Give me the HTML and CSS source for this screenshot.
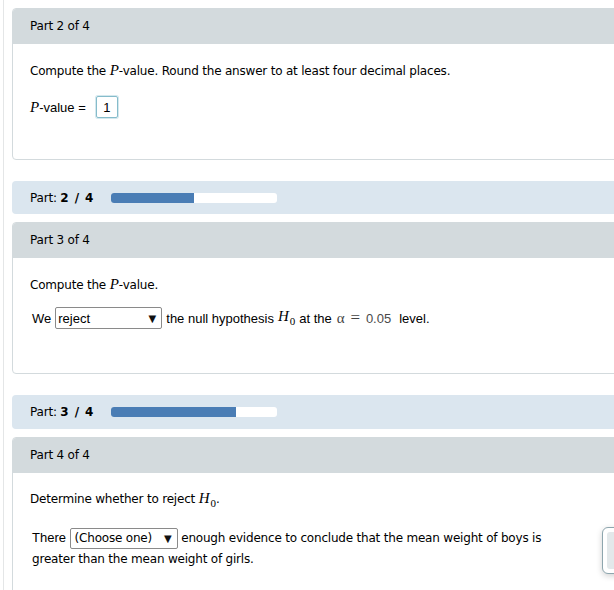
FILE: index.html
```html
<!DOCTYPE html>
<html lang="en">
<head>
<meta charset="utf-8">
<title>Hypothesis test parts</title>
<link rel="stylesheet" href="styles.css">
</head>
<body>
<div class="page">
  <section class="card">
    <div class="card-head">Part 2 of 4</div>
    <div class="card-body body-a">
      <p class="prompt">Compute the <i class="m">P</i>-value. Round the answer to at least four decimal places.</p>
      <div class="row row-a"><span class="ar"><i class="m">P</i>-value =</span><span class="num-box">1</span></div>
    </div>
  </section>

  <div class="progress progress-first"><span class="plabel">Part: <b>2 / 4</b></span><span class="track"><span class="fill" style="width:50%"></span></span></div>

  <section class="card card-b">
    <div class="card-head">Part 3 of 4</div>
    <div class="card-body body-b">
      <p class="prompt">Compute the <i class="m">P</i>-value.</p>
      <div class="row row-b">
        <span class="ar">We</span>
        <span class="select sel-reject"><span class="sel-text">reject</span><span class="arrow">&#9660;</span></span>
        <span class="ar">the null hypothesis</span>
        <span class="hh"><i class="m">H</i><sub>0</sub></span>
        <span class="ar">at the</span>
        <span class="alpha">&alpha;</span><span class="eq">=</span><span class="val">0.05</span>
        <span class="ar lvl">level.</span>
      </div>
    </div>
  </section>

  <div class="progress"><span class="plabel">Part: <b>3 / 4</b></span><span class="track"><span class="fill" style="width:75%"></span></span></div>

  <section class="card card-b">
    <div class="card-head">Part 4 of 4</div>
    <div class="card-body body-c">
      <p class="prompt">Determine whether to reject <span class="hh"><i class="m">H</i><sub>0</sub></span>.</p>
      <p class="para"><span class="ar">There</span> <span class="select sel-choose"><span class="sel-text">(Choose one)</span><span class="arrow">&#9660;</span></span> enough evidence to conclude that the mean weight of boys is greater than the mean weight of girls.</p>
    </div>
  </section>
</div>
<div class="float-tab"><span class="float-inner"></span></div>
</body>
</html>
```

FILE: styles.css
```css
html, body {
  margin: 0;
  padding: 0;
  overflow: hidden;
  background: #ffffff;
}

body {
  font-family: "DejaVu Sans", Verdana, sans-serif;
  font-size: 12px;
  letter-spacing: -0.2px;
  color: #000000;
  position: relative;
  min-height: 590px;
}

.page {
  margin-left: 3px;
  border-left: 1px solid #e4e6e7;
  padding: 8px 0 40px 8px;
  min-height: 600px;
}

.card {
  width: 640px;
  border: 1px solid #d3dadd;
  border-radius: 4px;
  overflow: hidden;
}

.card-b {
  margin-top: 8px;
}

.card-head {
  background: #d3dadd;
  height: 35px;
  line-height: 35px;
  padding-left: 17px;
  color: #000000;
}

.card-body {
  padding: 17px 17px 0 17px;
}

.body-a { padding-bottom: 41px; }
.body-b { padding-bottom: 44px; }
.body-c { padding-bottom: 40px; }

.prompt {
  margin: 0;
  line-height: 18px;
  height: 18px;
}

.m {
  font-family: "Liberation Serif", "Times New Roman", serif;
  font-style: italic;
  font-size: 15px;
  letter-spacing: 0;
}

.hh {
  letter-spacing: 0;
  line-height: 0;
}

.hh sub {
  font-family: "Liberation Serif", serif;
  font-size: 11px;
  line-height: 0;
  vertical-align: -4px;
  margin-left: 1px;
}

.ar {
  font-family: "Liberation Sans", Arial, sans-serif;
  font-size: 13px;
  letter-spacing: 0;
}

.row {
  display: flex;
  align-items: center;
  height: 22px;
}

.row-a { margin-top: 17px; }
.row-b { margin-top: 14px; padding-left: 2px; gap: 4px; }

.num-box {
  margin-left: 10px;
  width: 20px;
  height: 20px;
  border: 1px solid #86bccb;
  border-radius: 2px;
  box-shadow: 0 0 0 1px #d4e8ee;
  display: flex;
  align-items: center;
  justify-content: center;
  font-family: "Liberation Sans", Arial, sans-serif;
  font-size: 13px;
  letter-spacing: 0;
}

.select {
  display: inline-flex;
  align-items: center;
  justify-content: space-between;
  box-sizing: border-box;
  height: 22px;
  border: 1px solid #8a8a8a;
  border-radius: 2px;
  background: #ffffff;
  padding: 0 5px 0 2px;
  vertical-align: middle;
}

.sel-reject {
  width: 107px;
  font-family: "Liberation Sans", Arial, sans-serif;
  font-size: 13px;
  letter-spacing: 0;
}

.sel-choose {
  width: 108px;
  height: 21px;
  padding-left: 4px;
  line-height: 19px;
}

.arrow {
  font-family: "DejaVu Sans", sans-serif;
  font-size: 10px;
  letter-spacing: 0;
  color: #111111;
}

.alpha {
  font-family: "Liberation Serif", serif;
  font-size: 15px;
  color: #444444;
  margin-left: 1px;
}

.eq {
  font-family: "Liberation Serif", serif;
  font-size: 17px;
  color: #444444;
  margin: 0 2px;
}

.val {
  font-family: "Liberation Sans", Arial, sans-serif;
  font-size: 13px;
  letter-spacing: 0;
  color: #4a4a4a;
}

.lvl { margin-left: 4px; }

.para {
  margin: 20px 0 0 2px;
  width: 520px;
  line-height: 20px;
}

.progress {
  margin-top: 21px;
  width: 640px;
  height: 34px;
  box-sizing: border-box;
  background: #dbe6ef;
  border-radius: 4px;
  display: flex;
  align-items: center;
  padding-left: 18px;
}

.progress-first { height: 33px; }

.plabel {
  width: 81px;
}

.plabel b {
  font-weight: bold;
  letter-spacing: 0.9px;
}

.track {
  width: 166px;
  height: 10px;
  background: #ffffff;
  border-radius: 3px;
  overflow: hidden;
  display: flex;
}

.fill {
  background: #4a7db5;
  height: 100%;
}

.float-tab {
  position: absolute;
  left: 602px;
  top: 527px;
  width: 30px;
  height: 47px;
  border: 1px solid #8ea6ae;
  border-radius: 6px;
  background: #ffffff;
  box-shadow: 0 2px 6px rgba(0, 0, 0, 0.18);
  padding: 4px;
  box-sizing: border-box;
  display: flex;
}

.float-inner {
  flex: 1;
  background: #e3e8ea;
  border-radius: 3px;
}
```
